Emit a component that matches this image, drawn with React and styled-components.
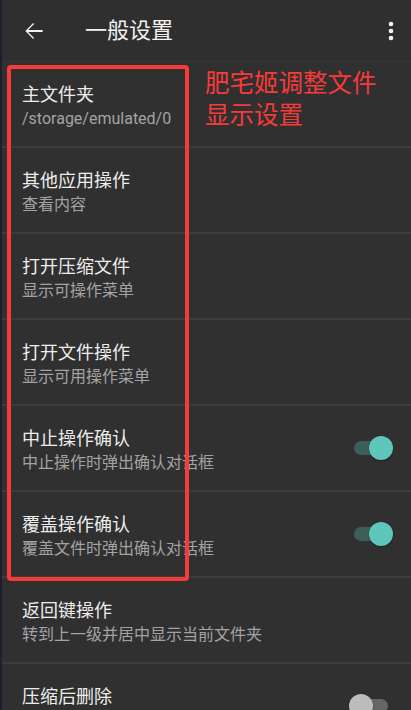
import styled, { createGlobalStyle } from 'styled-components';

const GlobalStyle = createGlobalStyle`
  html, body {
    margin: 0;
    padding: 0;
    background: #303030;
  }
  body {
    font-family: Roboto, "Noto Sans CJK SC", sans-serif;
    overflow: hidden;
  }
`;

const Page = styled.div`
  width: 411px;
  height: 710px;
  box-sizing: border-box;
  border-left: 2px solid #1e1e2c;
  background: #303030;
  display: flex;
  flex-direction: column;
  overflow: hidden;
`;

const AppBar = styled.header`
  height: 62px;
  flex: none;
  display: flex;
  align-items: center;
  background: #2f2f2f;
  border-bottom: 1px solid #353535;
  box-sizing: border-box;
  padding: 0 6px 0 18px;
`;

const IconButton = styled.div`
  width: 28px;
  height: 28px;
  display: flex;
  align-items: center;
  justify-content: center;
  color: #f2f2f2;
`;

const Title = styled.h1`
  flex: 1;
  margin: 0 0 0 37px;
  font-size: 22px;
  font-weight: 400;
  color: #f2f2f2;
  line-height: 28px;
`;

const List = styled.div`
  position: relative;
  flex: 1;
`;

const Item = styled.div`
  height: 86px;
  box-sizing: border-box;
  padding: 0 18px 0 20px;
  display: flex;
  align-items: center;
  justify-content: space-between;
  border-bottom: 2px solid #3c3c3c;
`;

const Texts = styled.div`
  display: flex;
  flex-direction: column;
  padding-top: 4px;
`;

const ItemTitle = styled.div`
  font-size: 18px;
  line-height: 24px;
  color: #ededed;
`;

const ItemSub = styled.div`
  margin-top: 1px;
  font-size: 16px;
  line-height: 22px;
  color: #a3a3a3;
`;

const Switch = styled.div`
  position: relative;
  width: 44px;
  height: 24px;
  flex: none;
  display: flex;
  align-items: center;
  justify-content: ${(p) => (p.$on ? 'flex-end' : 'flex-start')};
`;

const Track = styled.div`
  position: absolute;
  left: 5px;
  right: 5px;
  top: 5px;
  height: 14px;
  border-radius: 7px;
  background: ${(p) => (p.$on ? '#3d5f5b' : '#666666')};
`;

const Thumb = styled.div`
  position: relative;
  width: 24px;
  height: 24px;
  border-radius: 50%;
  background: ${(p) => (p.$on ? '#5fc6bb' : '#bcbcbc')};
  box-shadow: 0 1px 2px rgba(0, 0, 0, 0.35);
`;

const Callout = styled.div`
  position: absolute;
  left: 5px;
  top: 3px;
  width: 182px;
  height: 516px;
  box-sizing: border-box;
  border: 4px solid #f73a3a;
  border-radius: 4px;
  pointer-events: none;
`;

const CalloutText = styled.div`
  position: absolute;
  left: 203px;
  top: 6px;
  width: 190px;
  font-size: 24.5px;
  line-height: 32px;
  color: #f73a3a;
`;

const settings = [
  { title: '主文件夹', sub: '/storage/emulated/0' },
  { title: '其他应用操作', sub: '查看内容' },
  { title: '打开压缩文件', sub: '显示可操作菜单' },
  { title: '打开文件操作', sub: '显示可用操作菜单' },
  { title: '中止操作确认', sub: '中止操作时弹出确认对话框', toggle: true },
  { title: '覆盖操作确认', sub: '覆盖文件时弹出确认对话框', toggle: true },
  { title: '返回键操作', sub: '转到上一级并居中显示当前文件夹' },
  { title: '压缩后删除', sub: '删除已压缩的原始文件', toggle: false },
];

const BackIcon = () => (
  <svg width="26" height="26" viewBox="0 0 24 24" fill="currentColor">
    <path d="M20 11.1H6.6l5.5-5.5L11.2 4.7 4 12l7.2 7.3.9-.9-5.5-5.5H20v-1.8z" />
  </svg>
);

const MoreIcon = () => (
  <svg width="28" height="28" viewBox="0 0 24 24" fill="currentColor">
    <circle cx="12" cy="6" r="2" />
    <circle cx="12" cy="12" r="2" />
    <circle cx="12" cy="18" r="2" />
  </svg>
);

const App = () => {
  return (
    <>
      <GlobalStyle />
      <Page>
        <AppBar>
          <IconButton>
            <BackIcon />
          </IconButton>
          <Title>一般设置</Title>
          <IconButton>
            <MoreIcon />
          </IconButton>
        </AppBar>
        <List>
          {settings.map((s) => (
            <Item key={s.title}>
              <Texts>
                <ItemTitle>{s.title}</ItemTitle>
                <ItemSub>{s.sub}</ItemSub>
              </Texts>
              {s.toggle !== undefined && (
                <Switch $on={s.toggle}>
                  <Track $on={s.toggle} />
                  <Thumb $on={s.toggle} />
                </Switch>
              )}
            </Item>
          ))}
          <Callout />
          <CalloutText>
            肥宅姬调整文件
            <br />
            显示设置
          </CalloutText>
        </List>
      </Page>
    </>
  );
};

export default App;
